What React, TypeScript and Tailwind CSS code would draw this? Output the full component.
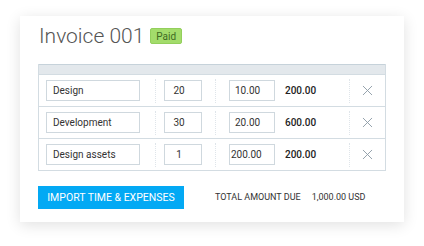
import { X } from "lucide-react";

type Line = { name: string; qty: string; rate: string; amount: string; ratePad: string };

const lines: Line[] = [
  { name: "Design", qty: "20", rate: "10.00", amount: "200.00", ratePad: "pl-[5px]" },
  { name: "Development", qty: "30", rate: "20.00", amount: "600.00", ratePad: "pl-[5px]" },
  { name: "Design assets", qty: "1", rate: "200.00", amount: "200.00", ratePad: "pl-[1px]" },
];

function Row({ line }: { line: Line }) {
  return (
    <div className="flex h-[32px] items-center border-t border-[#d3dce2]">
      {/* Item name */}
      <div className="flex w-[116px] items-center pl-[7px]">
        <div className="flex h-[21px] w-[94px] items-center border border-[#cfd8de] pl-[6px] text-[10px] text-[#333]">
          {line.name}
        </div>
      </div>
      {/* Qty */}
      <div className="flex h-[24px] w-[60px] items-center border-l border-dotted border-[#dfe5ea] pl-[8px]">
        <div className="flex h-[21px] w-[38px] items-center justify-center border border-[#cfd8de] pr-[8px] text-[10px] text-[#333]">
          {line.qty}
        </div>
      </div>
      {/* Rate + amount */}
      <div className="flex h-[24px] w-[134px] items-center border-l border-dotted border-[#dfe5ea] pl-[13px]">
        <div className={`flex h-[21px] w-[46px] items-center border border-[#cfd8de] ${line.ratePad} text-[10px] text-[#333]`}>
          {line.rate}
        </div>
        <span className="ml-[10px] text-[10px] font-medium text-[#222]">{line.amount}</span>
      </div>
      {/* Remove */}
      <div className="flex h-[24px] flex-1 items-center justify-center border-l border-dotted border-[#dfe5ea]">
        <X className="h-[17px] w-[17px] text-[#8d9ba6]" strokeWidth={1.3} />
      </div>
    </div>
  );
}

export default function App() {
  return (
    <div className="h-[246px] w-[424px] bg-white pt-[16px] pl-[20px]" style={{ fontFamily: "Roboto, 'Liberation Sans', sans-serif" }}>
      <div className="h-[206px] w-[384px] bg-white pl-[18px] pt-[6px] shadow-[0_3px_14px_rgba(0,0,0,0.12)]">
        {/* Header */}
        <div className="flex h-[28px] items-center">
          <h1 className="ml-[1px] text-[21px] font-light leading-none text-[#555]">Invoice 001</h1>
          <span className="ml-[6px] flex h-[16px] items-center rounded-[2px] border border-[#93cf5c] bg-[#a3dc6b] px-[5px] text-[10px] text-[#3f6a22]">
            Paid
          </span>
        </div>

        {/* Line items */}
        <div className="mt-[14px] w-[348px] border-x border-b border-[#d3dce2]">
          <div className="h-[10px] border-t border-[#c6d2da] bg-[#e3e8ec]" />
          {lines.map((l) => (
            <Row key={l.name} line={l} />
          ))}
        </div>

        {/* Footer */}
        <div className="mt-[15px] flex items-center">
          <button className="flex h-[23px] w-[146px] items-center justify-center bg-[#03a9f4] text-[10.5px] text-white">
            IMPORT TIME &amp; EXPENSES
          </button>
          <span className="ml-[31px] text-[9px] text-[#333]">TOTAL AMOUNT DUE</span>
          <span className="ml-[11px] text-[9px] text-[#333]">1,000.00 USD</span>
        </div>
      </div>
    </div>
  );
}
